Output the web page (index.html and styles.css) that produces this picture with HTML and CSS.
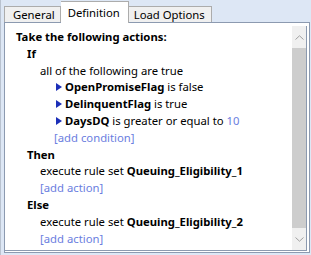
FILE: index.html
```html
<!DOCTYPE html>
<html lang="en">
<head>
    <meta charset="UTF-8">
    <title>Rule Definition</title>
    <link rel="stylesheet" href="styles.css">
</head>
<body>
    <div class="window">
        <div class="tabs">
            <div class="tab">General</div>
            <div class="tab active">Definition</div>
            <div class="tab">Load Options</div>
        </div>
        <div class="panel">
            <div class="viewer">
                <div class="content">
                    <div class="line bold">Take the following actions:</div>
                    <div class="line bold ind1">If</div>
                    <div class="line ind2">all of the following are true</div>
                    <div class="line ind3"><span class="arrow"></span><b>OpenPromiseFlag</b> is false</div>
                    <div class="line ind3"><span class="arrow"></span><b>DelinquentFlag</b> is true</div>
                    <div class="line ind3"><span class="arrow"></span><b>DaysDQ</b> is greater or equal to <span class="value">10</span></div>
                    <div class="line ind3"><span class="link">[add condition]</span></div>
                    <div class="line bold ind1">Then</div>
                    <div class="line ind2">execute rule set <b>Queuing_Eligibility_1</b></div>
                    <div class="line ind2"><span class="link">[add action]</span></div>
                    <div class="line bold ind1">Else</div>
                    <div class="line ind2">execute rule set <b>Queuing_Eligibility_2</b></div>
                    <div class="line ind2"><span class="link">[add action]</span></div>
                </div>
                <div class="scrollbar">
                    <div class="sb-btn">
                        <svg width="9" height="5" viewBox="0 0 9 5"><path d="M0.5 4.5 L4.5 0.8 L8.5 4.5" fill="none" stroke="#a0a0a0" stroke-width="1"/></svg>
                    </div>
                    <div class="sb-thumb"></div>
                    <div class="sb-btn">
                        <svg width="9" height="5" viewBox="0 0 9 5"><path d="M0.5 0.5 L4.5 4.2 L8.5 0.5" fill="none" stroke="#a0a0a0" stroke-width="1"/></svg>
                    </div>
                </div>
            </div>
        </div>
    </div>
</body>
</html>
```

FILE: styles.css
```css
body {
    margin: 0;
    background-color: #dde7f5;
    font-family: "Noto Sans", "Open Sans", sans-serif;
    font-size: 11.3px;
    color: #000000;
}
.window {
    width: 311px;
    height: 255px;
    box-sizing: border-box;
    border-left: 1px solid #b9c2cf;
    padding: 2px 1px 2px 3px;
    display: flex;
    flex-direction: column;
}
.tabs {
    display: flex;
    align-items: flex-end;
    height: 20px;
    position: relative;
    z-index: 1;
}
.tab {
    background-color: #f0f0f0;
    border: 1px solid #acacac;
    border-bottom: none;
    height: 15px;
    line-height: 15px;
    padding: 0 5px 0 8px;
}
.tab + .tab {
    border-left: none;
}
.tab.active {
    background-color: #ffffff;
    height: 21px;
    line-height: 22px;
    padding: 0 8px 0 7px;
    margin-bottom: -1px;
}
.tab:last-child {
    padding: 0 6px 0 5px;
}
.panel {
    flex: 1;
    background-color: #ffffff;
    border: 1px solid #8c9ab0;
    padding: 3px 2px 1px 0;
    display: flex;
}
.viewer {
    flex: 1;
    display: flex;
    border-right: 1px solid #8c9ab0;
    border-bottom: 1px solid #8c9ab0;
}
.content {
    flex: 1;
    padding: 3px 0 0 11px;
}
.line {
    height: 16.8px;
    line-height: 16.8px;
    white-space: nowrap;
}
.bold {
    font-weight: bold;
}
.ind1 { padding-left: 11px; }
.ind2 { padding-left: 24px; }
.ind3 { padding-left: 38px; }
.arrow {
    display: inline-block;
    width: 0;
    height: 0;
    border-top: 4px solid transparent;
    border-bottom: 4px solid transparent;
    border-left: 6px solid #1c2fb8;
    margin: 0 3px 0 2px;
}
.link, .value {
    color: #6b7ee0;
}
.scrollbar {
    width: 14px;
    background-color: #f0f0f0;
    display: flex;
    flex-direction: column;
}
.sb-btn {
    height: 22px;
    display: flex;
    align-items: center;
    justify-content: center;
}
.sb-thumb {
    flex: 1;
    background-color: #cdcdcd;
}
```
